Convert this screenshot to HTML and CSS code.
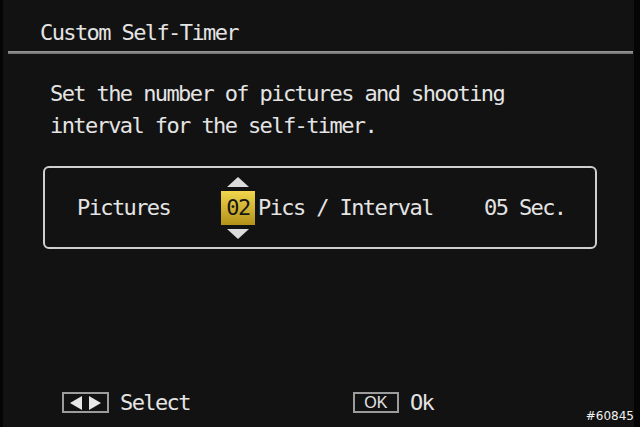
FILE: index.html
```html
<!DOCTYPE html>
<html lang="en">
<head>
    <meta charset="UTF-8">
    <title>Custom Self-Timer</title>
    <link rel="stylesheet" href="styles.css">
</head>
<body>
    <div class="pantalla">
        <div class="cabecera">Custom Self-Timer</div>
        <div class="linea"></div>

        <p class="descripcion">Set the number of pictures and shooting<br>interval for the self-timer.</p>

        <div class="caja">
            <span class="etiqueta">Pictures</span>
            <div class="selector">
                <span class="flecha arriba"></span>
                <span class="valor">02</span>
                <span class="flecha abajo"></span>
            </div>
            <span class="unidad">Pics / Interval</span>
            <span class="intervalo">05 Sec.</span>
        </div>

        <div class="pie">
            <div class="accion">
                <span class="tecla tecla-flechas">
                    <span class="tri izq"></span>
                    <span class="tri der"></span>
                </span>
                <span>Select</span>
            </div>
            <div class="accion accion-ok">
                <span class="tecla tecla-ok">OK</span>
                <span>Ok</span>
            </div>
        </div>

        <span class="marca">#60845</span>
    </div>
</body>
</html>
```

FILE: styles.css
```css
:root {
    --fondo: #121212;
    --texto: #e4e4e4;
    --borde: #cfcfcf;
    --oro-claro: #f1d54c;
    --oro-oscuro: #b3921a;
}

body {
    margin: 0;
    background-color: #050505;
    font-family: 'DejaVu Sans Mono', 'Liberation Mono', monospace;
    color: var(--texto);
}

.pantalla {
    position: relative;
    margin-left: 3px;
    width: 631px;
    height: 427px;
    background-color: var(--fondo);
    display: flex;
    flex-direction: column;
    font-size: 22px;
    letter-spacing: -1.6px;
}

.cabecera {
    padding: 21px 0 0 37px;
    height: 38px;
    line-height: 24px;
    box-sizing: border-box;
}

.linea {
    margin: 13px 1px 0 5px;
    height: 3px;
    background: linear-gradient(#9a9a9a, #6e6e6e);
}

.descripcion {
    margin: 24px 0 0 47px;
    line-height: 32px;
}

.caja {
    margin: 24px 0 0 40px;
    width: 554px;
    height: 83px;
    box-sizing: border-box;
    border: 2px solid var(--borde);
    border-radius: 6px;
    display: flex;
    align-items: center;
    padding-left: 32px;
}

.etiqueta {
    width: 144px;
}

.selector {
    display: flex;
    flex-direction: column;
    align-items: center;
    gap: 4px;
    width: 34px;
}

    .selector .valor {
        width: 34px;
        height: 34px;
        line-height: 34px;
        text-align: center;
        color: #161616;
        background: linear-gradient(var(--oro-claro), var(--oro-oscuro));
    }

.flecha {
    width: 0;
    height: 0;
    border-left: 11px solid transparent;
    border-right: 11px solid transparent;
}

    .flecha.arriba {
        border-bottom: 10px solid #dcdcdc;
    }

    .flecha.abajo {
        border-top: 10px solid #dcdcdc;
    }

.unidad {
    margin-left: 3px;
    width: 226px;
}

.pie {
    margin-top: auto;
    margin-bottom: 12px;
    display: flex;
    padding-left: 59px;
}

.accion {
    display: flex;
    align-items: center;
    gap: 11px;
}

.accion-ok {
    margin-left: 163px;
}

.tecla {
    box-sizing: border-box;
    height: 21px;
    border: 2px solid #9c9c9c;
    display: flex;
    align-items: center;
    justify-content: center;
}

.tecla-flechas {
    width: 47px;
    gap: 7px;
}

.tri {
    width: 0;
    height: 0;
    border-top: 7px solid transparent;
    border-bottom: 7px solid transparent;
}

    .tri.izq {
        border-right: 12px solid #e8e8e8;
    }

    .tri.der {
        border-left: 12px solid #e8e8e8;
    }

.tecla-ok {
    width: 46px;
    font-family: 'Liberation Sans', Arial, sans-serif;
    font-size: 16px;
    letter-spacing: 0;
}

.marca {
    position: absolute;
    right: 0;
    bottom: 4px;
    font-family: 'DejaVu Sans', sans-serif;
    font-size: 12px;
    letter-spacing: 0;
    color: #f0f0f0;
}
```
